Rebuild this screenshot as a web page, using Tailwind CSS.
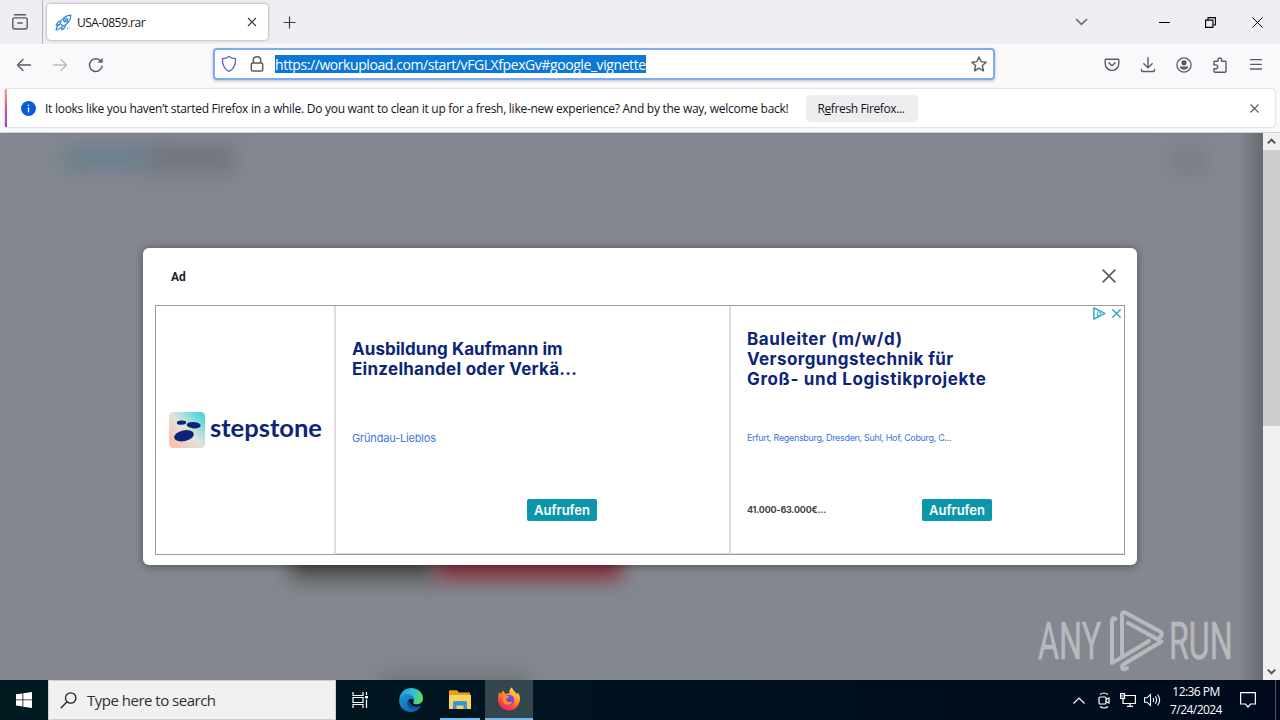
<!DOCTYPE html>
<html lang="en">
<head>
  <meta charset="UTF-8">
  <meta name="viewport" content="width=device-width, initial-scale=1.0">
  <title>USA-0859.rar</title>
  <script src="https://cdn.jsdelivr.net/npm/@tailwindcss/browser@4"></script>
</head>
<body class="w-[1280px] h-[720px] overflow-hidden flex flex-col bg-[#f9f9fb] text-[#15141a] text-[12px] font-['Open_Sans','Noto_Sans',sans-serif]">

  <!-- Tab strip -->
  <header class="h-11 shrink-0 flex bg-[#eeeef3] text-[#3f3e47]">
    <div class="w-[43px] border-r border-[#b4b4bc] flex items-center pl-[11px]">
      <svg class="w-[18px] h-[18px]" viewBox="0 0 18 18" fill="none" stroke="#5b5b66" stroke-width="1.4" stroke-linecap="round"><path d="M3.5 1.8H14.5M6.8 10H11.2"/><path d="M1.8 6.6C1.8 5.6 2.6 4.9 3.6 4.9H14.4C15.4 4.9 16.2 5.6 16.2 6.6V14C16.2 15.2 15.4 16 14.2 16H3.8C2.6 16 1.8 15.2 1.8 14Z"/></svg>
    </div>
    <div class="ml-[4px] mt-1 h-9 w-[221px] rounded bg-white shadow-[0_0_3px_rgba(0,0,0,0.4)] flex items-center pl-2 pr-[11px]">
      <svg class="w-[17px] h-[17px]" viewBox="0 0 17 17" fill="none" stroke="#2f86d6" stroke-width="1.2"><path d="M5 9.5C6 5.5 10 1.2 15.8 1.2C16 6.5 12 10.7 8 12.3Z"/><circle cx="10.7" cy="6" r="2"/><circle cx="10.7" cy="6" r=".5"/><path d="M6 7.2C3.5 7 2.3 8.6 1.3 11L5 10.6M10.4 11C10.6 13.2 8.8 14.8 6.8 15.7L7 12.4M4.5 11C2.2 11.7 1.4 13.5 1.2 15.8C3.5 15.6 5 14.8 6 13"/><path d="M12 14.5h2.4" stroke-dasharray="1 1"/></svg>
      <span class="ml-[5px] pt-[2px] text-[12px] text-[#15141a] tracking-[-0.48px]">USA-0859.rar</span>
      <svg class="ml-auto w-[10px] h-[10px]" viewBox="0 0 10 10" stroke="currentColor" stroke-width="1.2"><path d="M1 1L9 9M9 1L1 9"/></svg>
    </div>
    <svg class="ml-[15px] mt-[16px] w-[13px] h-[13px]" viewBox="0 0 13 13" stroke="currentColor" stroke-width="1.2"><path d="M.5 6.5H12.5M6.5 .5V12.5"/></svg>
    <div class="ml-auto flex items-center pr-[17px] text-black">
      <svg class="w-[13px] h-2 text-[#6b6a73] mr-[71px]" viewBox="0 0 13 8" fill="none" stroke="currentColor" stroke-width="1.5"><path d="M1 1L6.5 6.4L12 1"/></svg>
      <svg class="w-[11px] h-[11px] mr-[35px]" viewBox="0 0 11 11" stroke="currentColor"><path d="M0 5.5H11"/></svg>
      <svg class="w-[11px] h-[11px] mr-[36px]" viewBox="0 0 11 11" fill="none" stroke="currentColor" stroke-width="1.1"><path d="M.6 3.1H7.9V10.4H.6ZM3 3V.6H10.4V8H8"/></svg>
      <svg class="w-[11px] h-[11px]" viewBox="0 0 11 11" stroke="currentColor"><path d="M.5 .5L10.5 10.5M10.5 .5L.5 10.5"/></svg>
    </div>
  </header>

  <!-- Navigation toolbar -->
  <nav class="h-11 shrink-0 flex items-start text-[#5b5b66]">
    <div class="flex items-center h-[41px] pl-4 w-[213px]">
      <svg class="w-4 h-4" viewBox="0 0 16 16" fill="none" stroke="currentColor" stroke-width="1.4" stroke-linecap="round" stroke-linejoin="round"><path d="M14.5 8H1.5M7 2.5L1.5 8L7 13.5"/></svg>
      <svg class="w-4 h-4 ml-5 text-[#b9b9c0]" viewBox="0 0 16 16" fill="none" stroke="currentColor" stroke-width="1.4" stroke-linecap="round" stroke-linejoin="round"><path d="M1.5 8H14.5M9 2.5L14.5 8L9 13.5"/></svg>
      <svg class="w-4 h-4 ml-5" viewBox="0 0 16 16" fill="none" stroke="currentColor" stroke-width="1.4" stroke-linecap="round"><path d="M14.2 9.2A6.4 6.4 0 1 1 12.8 4"/><path d="M14.6 .8V5.8H9.6Z" fill="currentColor" stroke="none"/></svg>
    </div>
    <!-- Address bar -->
    <div class="mt-1 h-8 w-[782px] rounded border-2 border-[#7fabec] bg-white shadow-[0_1px_3px_rgba(0,0,0,0.25)] flex items-center pl-[6px] pr-[6px]">
      <svg class="w-4 h-[18px]" viewBox="0 0 16 18" fill="none" stroke="#6a62c4" stroke-width="1.4"><path d="M8 1.5C6 3 4 3.6 1.5 3.6C1.2 9.5 3 14 8 16.3C13 14 14.8 9.5 14.5 3.6C12 3.6 10 3 8 1.5Z"/></svg>
      <svg class="ml-[13px] w-[14px] h-[18px]" viewBox="0 0 14 18" fill="none" stroke="currentColor" stroke-width="1.5"><rect x="1.3" y="8" width="11.4" height="8" rx="1.6"/><path d="M3.3 8V5.2C3.3 0.6 10.7 .6 10.7 5.2V8"/></svg>
      <span class="ml-[11px] h-[18px] w-[371px] leading-[20px] bg-[#0a78d4] text-white text-[14px] tracking-[-0.42px] whitespace-nowrap">https://workupload.com/start/vFGLXfpexGv#google_vignette</span>
      <svg class="ml-auto w-4 h-4" viewBox="0 0 16 16" fill="none" stroke="currentColor" stroke-width="1.4" stroke-linejoin="round"><path d="M8 1L10.1 5.6L15.2 6.2L11.4 9.6L12.5 14.8L8 12.2L3.5 14.8L4.6 9.6L.8 6.2L5.9 5.6Z"/></svg>
    </div>
    <div class="ml-auto flex items-center h-[41px] pr-4 gap-5">
      <svg class="w-4 h-4" viewBox="0 0 16 16" fill="none" stroke="currentColor" stroke-width="1.4" stroke-linecap="round" stroke-linejoin="round"><path d="M1.8 2.2H14.2Q14.8 2.2 14.8 2.800V6.5C14.8 15.6 1.2 15.6 1.2 6.5V2.800Q1.2 2.2 1.8 2.2Z"/><path d="M4.8 5.8L8 8.800L11.2 5.800"/></svg>
      <svg class="w-4 h-4" viewBox="0 0 16 16" fill="none" stroke="currentColor" stroke-width="1.4" stroke-linecap="round" stroke-linejoin="round"><path d="M8 .8V10.5M3.8 6.8L8 10.8L12.2 6.8M1.5 12.5V13.3Q1.5 14.5 2.7 14.5H13.3Q14.5 14.5 14.5 13.3V12.5"/></svg>
      <svg class="w-4 h-4" viewBox="0 0 16 16" fill="none" stroke="currentColor" stroke-width="1.3"><circle cx="8" cy="8" r="7.1"/><circle cx="8" cy="5.8" r="2.6" fill="currentColor" stroke="none"/><path d="M3.8 9.6H12.2C12 12 10 12.8 8 12.8C6 12.8 4 12 3.8 9.6Z" fill="currentColor" stroke="none"/></svg>
      <svg class="w-4 h-4" viewBox="0 0 16 16" fill="none" stroke="currentColor" stroke-width="1.4" stroke-linejoin="round"><path d="M2 7.2V5.2Q2 4.2 3 4.2H6V2.8C6 .4 9.6 .4 9.6 2.8V4.2H13Q14 4.2 14 5.2V14.2Q14 15.2 13 15.2H3Q2 15.2 2 14.2V11.8H4C6.2 11.8 6.2 7.9 4 7.9H1.2"/></svg>
      <svg class="w-4 h-4" viewBox="0 0 16 16" stroke="currentColor" stroke-width="1.3" stroke-linecap="round"><path d="M2.5 2.6H13.5M2.5 7.3H13.5M2.5 12H13.5"/></svg>
    </div>
  </nav>

  <!-- Notification bar -->
  <div class="h-[45px] shrink-0 pl-[5px] pr-[5px] pt-px border-b border-[#d0d2d6]">
    <div class="h-[38px] rounded-r bg-white shadow-[0_0_2px_rgba(0,0,0,0.3)] flex items-center">
      <div class="w-[2px] h-full bg-linear-to-b from-[#ffa36b] via-[#d6508e] to-[#8a4bb5]"></div>
      <svg class="ml-[14px] w-[15px] h-[15px]" viewBox="0 0 15 15"><circle cx="7.5" cy="7.5" r="7.5" fill="#0b5bd8"/><path d="M7.5 6.6V11.2M7.5 3.8V5.1" stroke="#fff" stroke-width="1.4"/></svg>
      <span class="ml-[9px] w-[761px] pt-[2px] whitespace-nowrap tracking-[-0.272px]">It looks like you haven’t started Firefox in a while. Do you want to clean it up for a fresh, like-new experience? And by the way, welcome back!</span>
      <button class="h-[27px] w-[112px] rounded bg-[#eeeef0] pt-[2px] pr-[2px] tracking-[-0.38px]">R<span class="underline">e</span>fresh Firefox...</button>
      <svg class="ml-auto mr-[16px] w-[9px] h-[9px]" viewBox="0 0 9 9" stroke="#5b5b66" stroke-width="1.1"><path d="M.5 .5L8.5 8.5M8.5 .5L.5 8.5"/></svg>
    </div>
  </div>

  <!-- Page -->
  <main class="h-[547px] shrink-0 flex">
    <div class="relative w-[1263px] overflow-hidden bg-[#84878f] flex flex-col items-center">
      <!-- Blurred page behind the ad -->
      <div class="absolute left-[64px] top-[13px] w-[90px] h-[24px] bg-[#687f8d] blur-[10px]"></div>
      <div class="absolute left-[150px] top-[13px] w-[86px] h-[26px] bg-[#70747c] blur-[10px]"></div>
      <div class="absolute left-[1172px] top-[15px] w-[34px] h-[26px] bg-[#797c85] blur-[10px]"></div>
      <div class="absolute left-[290px] top-[400px] w-[145px] h-[46px] bg-[#4c4e4b] blur-[10px]"></div>
      <div class="absolute left-[436px] top-[400px] w-[186px] h-[46px] bg-[#852f3b] blur-[10px]"></div>
      <div class="absolute left-[380px] top-[542px] w-[150px] h-[20px] bg-[#6d7074] blur-[10px]"></div>
      <div class="absolute right-0 top-0 w-[25px] h-full bg-linear-to-r from-transparent to-[#676a71]"></div>

      <!-- Vignette ad -->
      <section class="relative ml-[17px] mt-[115px] w-[994px] h-[317px] rounded-[6px] bg-white shadow-[0_1px_8px_rgba(0,0,0,0.4)] px-3">
        <div class="h-[57px] flex items-center justify-between pl-[16px] pr-[9px]">
          <span class="font-bold text-[12px] font-['Roboto',sans-serif] text-[#202124]">Ad</span>
          <svg class="w-[14px] h-[14px] mb-px" viewBox="0 0 14 14" stroke="#5f6368" stroke-width="1.8"><path d="M.7 .7L13.3 13.3M13.3 .7L.7 13.3"/></svg>
        </div>
        <div class="relative h-[250px] border border-[#9b9b9b] flex font-['Inter',sans-serif] text-[#0c2577]">
          <div class="w-[178px] flex items-center pl-[13px]">
            <svg class="w-[36px] h-[36px]" viewBox="0 0 36 36">
              <defs>
                <linearGradient id="logo" x1="0" y1="1" x2="1" y2="0"><stop offset="0" stop-color="#ffb8a8"/><stop offset=".5" stop-color="#e3e4da"/><stop offset="1" stop-color="#2fd3dc"/></linearGradient>
              </defs>
              <rect width="36" height="36" rx="4.5" fill="url(#logo)"/>
              <g fill="#0c2577"><ellipse cx="12.5" cy="10.6" rx="4.7" ry="2.1" transform="rotate(-4 12.5 10.6)"/><ellipse cx="24.7" cy="13.2" rx="7" ry="3.2" transform="rotate(4 24.7 13.2)"/><ellipse cx="15" cy="23.7" rx="10" ry="5.4" transform="rotate(-12 15 23.7)"/></g>
            </svg>
            <svg class="ml-[5px] w-[114px] h-[36px]" viewBox="0 0 114 36"><text x="0" y="25" textLength="112" lengthAdjust="spacingAndGlyphs" font-family="Lato, sans-serif" font-weight="700" font-size="25" fill="#0c2577">stepstone</text></svg>
          </div>
          <div class="w-[395px] border-l-2 border-b border-[#dcdcdc] pl-[16px] pt-[33px]">
            <h2 class="h-[91px] text-[17px] leading-[20px] font-bold whitespace-nowrap"><span class="tracking-[0.05px]">Ausbildung Kaufmann im</span><br><span class="tracking-[0.27px]">Einzelhandel oder Verkä...</span></h2>
            <p class="h-[69px] text-[11px] leading-4 tracking-[-0.18px] text-[#3c78dc]">Gründau-Lieblos</p>
            <a class="ml-[175px] flex items-center justify-center w-[70px] h-[22px] rounded-[2px] bg-[#0c96aa] pt-px text-white text-[13px] font-semibold">Aufrufen</a>
          </div>
          <div class="w-[395px] border-l-2 border-b border-[#dcdcdc] pl-[16px] pt-[23px]">
            <h2 class="h-[101px] text-[17px] leading-[20px] font-bold whitespace-nowrap"><span class="tracking-[0.6px]">Bauleiter (m/w/d)</span><br><span class="tracking-[0.42px]">Versorgungstechnik für</span><br><span class="tracking-[0.64px]">Groß- und Logistikprojekte</span></h2>
            <p class="h-[69px] text-[9px] leading-4 tracking-[-0.33px] text-[#3c78dc] whitespace-nowrap">Erfurt, Regensburg, Dresden, Suhl, Hof, Coburg, C...</p>
            <div class="flex items-center">
              <span class="w-[175px] text-[9px] font-bold text-[#444] tracking-[-0.2px]">41.000-63.000€...</span>
              <a class="flex items-center justify-center w-[70px] h-[22px] rounded-[2px] bg-[#0c96aa] pt-px text-white text-[13px] font-semibold">Aufrufen</a>
            </div>
          </div>
          <!-- AdChoices -->
          <div class="absolute right-0 top-0 h-[15px] flex items-center gap-[6px] pr-[3px] bg-white">
            <svg class="w-[13px] h-[13px]" viewBox="0 0 13 13" fill="none" stroke="#1fa9bb" stroke-width="1.4" stroke-linejoin="round"><path d="M.9 .9L12 6.5L.9 12.1Z"/><path d="M4.5 5.6V9.4L8.5 6.6L4.5 4.3" stroke-width=".9"/></svg>
            <svg class="w-[9px] h-[9px]" viewBox="0 0 9 9" stroke="#1fa9bb" stroke-width="1.3"><path d="M.4 .4L8.6 8.6M8.6 .4L.4 8.6"/></svg>
          </div>
        </div>
      </section>

      <!-- Watermark -->
      <svg class="absolute left-[1036px] top-[474px] w-[198px] h-[68px]" viewBox="0 0 198 68" fill="none" stroke="#b7b9bd" stroke-width="4" stroke-linecap="round" stroke-linejoin="round">
        <g fill="#b7b9bd" stroke="#b7b9bd" stroke-width=".6" font-family="Roboto, sans-serif" font-size="51" font-weight="400">
          <text transform="translate(2 52) scale(.65 1)" textLength="97" lengthAdjust="spacingAndGlyphs">ANY</text>
          <text transform="translate(133 52) scale(.65 1)" textLength="98" lengthAdjust="spacingAndGlyphs">RUN</text>
        </g>
        <path d="M79.500 12Q76 10 76 14V56L113 34"/>
        <path d="M92 16L125.500 34.500L88 57Q85 59 87 62Q88.500 63 91 61"/>
        <path d="M86 50V8Q86 4 90 6L125 25Q127 28 124 30"/>
      </svg>
    </div>

    <!-- Scrollbar -->
    <div class="w-[17px] bg-[#f0f0f0] flex flex-col">
      <div class="h-[17px] flex items-center justify-center"><svg class="w-[9px] h-[7px]" viewBox="0 0 9 7" fill="none" stroke="#555" stroke-width="2"><path d="M.8 5.4L4.5 1.7L8.2 5.4"/></svg></div>
      <div class="h-[276px] bg-[#cdcdcd]"></div>
      <div class="h-[17px] mt-auto flex items-center justify-center"><svg class="w-[9px] h-[7px]" viewBox="0 0 9 7" fill="none" stroke="#555" stroke-width="2"><path d="M.8 1.6L4.5 5.3L8.2 1.6"/></svg></div>
    </div>
  </main>

  <!-- Taskbar -->
  <footer class="h-10 shrink-0 flex bg-linear-to-r from-[#001a22] to-[#000a1c] text-white">
    <div class="w-12 flex items-center justify-center">
      <svg class="w-4 h-4" viewBox="0 0 16 16" fill="#fff"><path d="M0 2.3L6.5 1.4V7.5H0ZM7.3 1.3L16 0V7.5H7.3ZM0 8.3H6.5V14.5L0 13.6ZM7.3 8.3H16V16L7.3 14.7Z"/></svg>
    </div>
    <div class="w-[288px] bg-[#f1f1f1] border border-[#cfcfcf] flex items-center pl-[11px] text-[#2f2f2f]">
      <svg class="w-[17px] h-[17px]" viewBox="0 0 17 17" fill="none" stroke="#222" stroke-width="1.3"><circle cx="10.7" cy="6" r="5.2"/><path d="M7 9.8L.8 16.2"/></svg>
      <span class="ml-[10px] pt-px text-[15px] tracking-[-0.5px]">Type here to search</span>
    </div>
    <div class="w-12 flex items-center justify-center">
      <svg class="w-4 h-4" viewBox="0 0 16 16" fill="none" stroke="#fff" stroke-width="1.2"><path d="M1 0V3.5H11V0M1 16V12.5H11V16M1 5.5H11V10.5H1ZM14.5 0V3M14.5 7.5V16"/><path d="M13 5.2H16" stroke-width="2.4"/></svg>
    </div>
    <div class="w-[54px] flex items-center justify-center">
      <svg class="w-6 h-6" viewBox="0 0 24 24">
        <defs>
          <linearGradient id="edgeTop" x1="0" y1=".3" x2="1" y2=".5"><stop offset="0" stop-color="#279fe0"/><stop offset=".6" stop-color="#30c6c6"/><stop offset="1" stop-color="#66dc58"/></linearGradient>
          <linearGradient id="edgeLow" x1="0" y1="0" x2="1" y2="1"><stop offset="0" stop-color="#1e96dd"/><stop offset="1" stop-color="#0c59a4"/></linearGradient>
        </defs>
        <path d="M.3 11C1 4.500 6 0 12.300 0C19.500 0 24 5.300 24 10.200C24 14.200 21 16.300 17.500 16.300C15 16.300 13.800 15.400 14.300 14.400C16 11.500 13.500 8 9.500 8C5 8 1 9 .3 11Z" fill="url(#edgeTop)"/>
        <path d="M.2 11.500C1.500 7.500 5.200 6 8.600 6C12.500 6 15.500 9 15 12C11 8.500 7 13 9 17C10.800 20.600 16 21.300 22 17.700C20 21.500 16.300 24 12 24C5 24 -.5 18.500 .2 11.500Z" fill="url(#edgeLow)"/>
        <path d="M9.300 12C7.800 14 8 17.500 10.500 20C12.500 21.500 18 21.300 22.200 17.500C16 20 11 17 9.300 12Z" fill="#104d91"/>
      </svg>
    </div>
    <div class="ml-[2px] w-10 border-b-2 border-[#76b9ed] flex items-center justify-center pt-[2px]">
      <svg class="w-[22px] h-[20px]" viewBox="0 0 22 20"><path d="M0 1Q0 .3 .8 .3H8L10 2.5H21V6H0Z" fill="#e6a020"/><path d="M0 5H22V19H0Z" fill="#fcd35e"/><path d="M4 19V12.5Q4 11 5.5 11H16.5Q18 11 18 12.5V19H14.5V15.5H7.5V19Z" fill="#3a96d8"/></svg>
    </div>
    <div class="ml-[5px] w-12 bg-[#33464d] border-b-2 border-[#76b9ed] flex items-center justify-center">
      <svg class="w-6 h-6" viewBox="0 0 24 24">
        <defs><linearGradient id="fox" x1=".8" y1="0" x2=".25" y2="1"><stop offset="0" stop-color="#fff04a"/><stop offset=".4" stop-color="#ff9a26"/><stop offset=".75" stop-color="#ff4140"/><stop offset="1" stop-color="#e5207b"/></linearGradient></defs>
        <path d="M2.500 5L4.200 7L6 3.500L8.500 7L12.500 6C12 4 13 1.500 15 .3C15.500 3.500 18.500 4.500 20 7.500L20.800 5.500C23 8.500 23.500 11.500 22.500 15C21 20 17 23.500 12 23.500C6 23.500 1 19 1 12.500C1 9.500 1.500 7 2.500 5Z" fill="url(#fox)"/>
        <circle cx="12" cy="13" r="5.2" fill="#7542e5"/>
        <path d="M5 9C8 8.500 10.500 8.500 12.500 9.800C11.500 11.300 9.300 11.500 9 12.500C9.500 15 13 16 15.500 14C15 18 8.500 19.500 6 15Z" fill="#ff8a22"/>
      </svg>
    </div>

    <!-- Tray -->
    <div class="ml-auto flex items-center">
      <svg class="w-3 h-[7px]" viewBox="0 0 12 7" fill="none" stroke="#fff" stroke-width="1.2"><path d="M.5 6.5L6 1L11.5 6.5"/></svg>
      <svg class="ml-[13px] w-[12px] h-[17px]" viewBox="0 0 12 17" fill="none" stroke="#fff" stroke-width="1.2"><rect x="1" y="5" width="7" height="7" rx="1"/><path d="M8 7.5L11 6V11L8 9.5M2 2.5Q6 -.5 10 2.5M2 14.5Q6 17.5 10 14.5"/></svg>
      <svg class="ml-[10px] w-[16px] h-[14px]" viewBox="0 0 16 14" fill="none" stroke="#fff" stroke-width="1.2"><path d="M5 2.5H15.4V10.5H3V6M7 13.4H13M10 10.5V13.4M.6 .6H4.5V5.4H.6ZM1 3H4.5"/></svg>
      <svg class="ml-[8px] w-[17px] h-[14px]" viewBox="0 0 17 14" fill="none" stroke="#fff" stroke-width="1.1"><path d="M.6 4.8H3L6.5 1.5V12.5L3 9.2H.6ZM9 5Q10.500 7 9 9M11.300 3.300Q14 7 11.300 10.700M13.500 1.500Q17.800 7 13.500 12.500"/></svg>
      <div class="w-[70px] pt-px text-center text-[12px] leading-[18px] tracking-[-0.55px]">12:36 PM<br>7/24/2024</div>
      <svg class="ml-[9px] mr-[19px] w-[16px] h-[16px]" viewBox="0 0 16 16" fill="none" stroke="#fff" stroke-width="1.2"><path d="M.6 .6H15.4V12H10.5L8 15L5.5 12H.6Z"/></svg>
      <div class="w-[5px] h-full border-l border-[#4a5260]"></div>
    </div>
  </footer>
</body>
</html>
